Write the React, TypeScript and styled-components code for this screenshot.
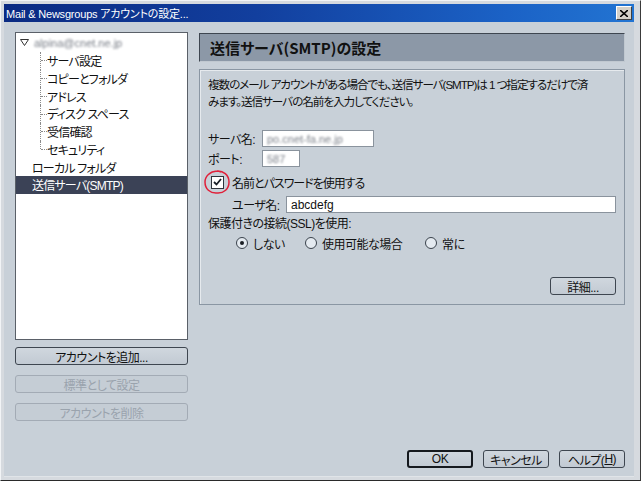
import React from "react";
import styled, { createGlobalStyle } from "styled-components";

const Global = createGlobalStyle`
  html, body { margin: 0; padding: 0; background: #ffffff; }
  body {
    font-family: "Liberation Sans", "Noto Sans CJK JP", sans-serif;
    font-size: 12px;
    color: #111;
    font-feature-settings: "palt";
    letter-spacing: -0.5px;
  }
  * { box-sizing: border-box; }
`;

const Window = styled.div`
  width: 641px;
  height: 481px;
  display: flex;
  flex-direction: column;
  background: #d6dadf;
  border: 1px solid;
  border-color: #f2f4f6 #3a3a3a #2a2a2a #f2f4f6;
  padding: 3px 6px 3px 3px;
  overflow: hidden;
`;

const TitleBar = styled.div`
  height: 18px;
  display: flex;
  align-items: center;
  justify-content: space-between;
  padding: 0 2px 0 2px;
  background: linear-gradient(90deg, #0a2a82 0%, #123f9e 40%, #1b62c6 80%, #2274d2 100%);
  color: #fff;
  font-size: 11px;
  letter-spacing: -0.2px;
  white-space: nowrap;
`;

const CloseBtn = styled.div`
  width: 16px;
  height: 14px;
  background: #d4d0c8;
  border: 1px solid;
  border-color: #ffffff #404040 #404040 #ffffff;
  display: flex;
  align-items: center;
  justify-content: center;
`;

const Body = styled.div`
  flex: 1;
  display: flex;
  flex-direction: column;
  background: #c8d0d8;
  padding: 10px 8px 8px 11px;
  border-bottom: 1px solid #e0e4e8;
`;

const Main = styled.div`
  display: flex;
  gap: 11px;
`;

const LeftCol = styled.div`
  width: 173px;
  display: flex;
  flex-direction: column;
`;

const Tree = styled.div`
  height: 308px;
  background: #fff;
  border: 1px solid #5a6068;
  padding-top: 1px;
  position: relative;
`;

const Row = styled.div<{ $indent: number; $selected?: boolean }>`
  height: 17.75px;
  display: flex;
  align-items: center;
  padding-left: ${(p) => p.$indent}px;
  background: ${(p) => (p.$selected ? "#3b4256" : "transparent")};
  color: ${(p) => (p.$selected ? "#ffffff" : "#111")};
  white-space: nowrap;
  position: relative;
  letter-spacing: -0.8px;
`;

const Blurred = styled.span`
  color: #7a7f88;
  filter: blur(1.1px);
  font-size: 11px;
  letter-spacing: 0;
`;

const Twisty = styled.svg`
  width: 9px;
  height: 7px;
  margin-right: 5px;
  flex: none;
`;

const Connector = styled.span<{ $last?: boolean }>`
  position: absolute;
  left: 24px;
  top: 0;
  width: 6px;
  height: ${(p) => (p.$last ? "50%" : "100%")};
  border-left: 1px dotted #8a8a8a;
  &::after {
    content: "";
    position: absolute;
    left: 0;
    top: 8.5px;
    width: 6px;
    border-top: 1px dotted #8a8a8a;
  }
`;

const Button = styled.button<{ $w?: number; $default?: boolean }>`
  width: ${(p) => (p.$w ? `${p.$w}px` : "100%")};
  height: 18px;
  padding: 0;
  font-family: "Liberation Sans", "Noto Sans CJK JP", sans-serif;
  font-feature-settings: "palt";
  font-size: 12px;
  letter-spacing: -0.5px;
  color: #111;
  background: linear-gradient(180deg, #d0d7de 0%, #c2cad3 100%);
  border: ${(p) => (p.$default ? "2px solid #15191e" : "1px solid #3e4650")};
  border-radius: 3px;
  display: flex;
  align-items: center;
  justify-content: center;
  white-space: nowrap;
  &:disabled {
    color: #9aa3ad;
    border-color: #a3abb5;
    background: #c5cdd5;
  }
`;

const LeftButtons = styled.div`
  display: flex;
  flex-direction: column;
  gap: 10px;
  margin-top: 7px;
`;

const RightCol = styled.div`
  width: 426px;
  display: flex;
  flex-direction: column;
  margin-top: 1px;
`;

const Header = styled.div`
  height: 29px;
  background: #8c98a7;
  border: 1px solid;
  border-color: #3e4650 #c0c8d0 #c0c8d0 #3e4650;
  display: flex;
  align-items: center;
  padding-left: 10px;
  font-size: 15px;
  font-weight: bold;
  letter-spacing: 0;
  color: #111;
  font-family: "Noto Sans CJK JP", sans-serif;
`;

const Panel = styled.div`
  margin-top: 7px;
  height: 236px;
  border: 1px solid #8a96a3;
  box-shadow: inset 1px 1px 0 #e6eaee;
  padding: 6px 8px 9px 8px;
  display: flex;
  flex-direction: column;
`;

const Desc = styled.div`
  line-height: 17px;
  white-space: nowrap;
  margin-bottom: 20px;
  font-size: 11.6px;
  letter-spacing: -1.05px;
`;

const FieldRow = styled.div<{ $indent?: number; $mt?: number }>`
  display: flex;
  align-items: center;
  height: 17px;
  padding-left: ${(p) => p.$indent ?? 0}px;
  margin-top: ${(p) => p.$mt ?? 0}px;
  white-space: nowrap;
`;

const Label = styled.span`
  width: 54px;
  flex: none;
`;

const Input = styled.div<{ $w?: number; $flex?: boolean }>`
  width: ${(p) => (p.$w ? `${p.$w}px` : "auto")};
  flex: ${(p) => (p.$flex ? 1 : "none")};
  height: 17px;
  background: #fff;
  border: 1px solid #8a939d;
  display: flex;
  align-items: center;
  padding-left: 4px;
  overflow: hidden;
  letter-spacing: 0;
`;

const CheckRow = styled.div`
  display: flex;
  align-items: center;
  height: 18px;
  margin-top: 6px;
  padding-left: 3px;
  position: relative;
  white-space: nowrap;
  letter-spacing: -1px;
`;

const CheckBox = styled.span`
  width: 13px;
  height: 13px;
  background: #fff;
  border: 1px solid #2e343c;
  display: flex;
  align-items: center;
  justify-content: center;
  margin-right: 8px;
`;

const Annotation = styled.svg`
  position: absolute;
  left: -5px;
  top: -4px;
  width: 28px;
  height: 26px;
  pointer-events: none;
`;

const RadioRow = styled.div`
  display: flex;
  align-items: center;
  height: 18px;
  margin-top: 3px;
  padding-left: 28px;
  white-space: nowrap;
`;

const RadioOption = styled.div<{ $w?: number }>`
  width: ${(p) => (p.$w ? `${p.$w}px` : "auto")};
  display: flex;
  align-items: center;
  gap: 5px;
`;

const Radio = styled.span<{ $on?: boolean }>`
  width: 12px;
  height: 12px;
  border-radius: 50%;
  border: 1px solid #3a424c;
  background: #e4eaf0;
  display: flex;
  align-items: center;
  justify-content: center;
  &::after {
    content: "";
    width: 4px;
    height: 4px;
    border-radius: 50%;
    background: #1a1e24;
    display: ${(p) => (p.$on ? "block" : "none")};
  }
`;

const PanelFooter = styled.div`
  margin-top: auto;
  display: flex;
  justify-content: flex-end;
`;

const Footer = styled.div`
  margin-top: auto;
  display: flex;
  justify-content: flex-end;
  gap: 10px;
  padding-right: 1px;
`;

const treeChildren = ["サーバ設定", "コピーとフォルダ", "アドレス", "ディスク スペース", "受信確認", "セキュリティ"];

export default function App() {
  return (
    <>
      <Global />
      <Window>
        <TitleBar>
          <span>Mail &amp; Newsgroups アカウントの設定...</span>
          <CloseBtn>
            <svg width="8" height="7" viewBox="0 0 8 7">
              <path d="M0 0 L8 7 M8 0 L0 7" stroke="#000" strokeWidth="1.6" />
            </svg>
          </CloseBtn>
        </TitleBar>
        <Body>
          <Main>
            <LeftCol>
              <Tree>
                <Row $indent={4}>
                  <Twisty viewBox="0 0 9 7">
                    <path d="M0.5 0.5 L8.5 0.5 L4.5 6.5 Z" fill="#fff" stroke="#333" strokeWidth="1" />
                  </Twisty>
                  <Blurred>alpina@cnet.ne.jp</Blurred>
                </Row>
                {treeChildren.map((t, i) => (
                  <Row key={t} $indent={31}>
                    <Connector $last={i === treeChildren.length - 1} />
                    {t}
                  </Row>
                ))}
                <Row $indent={16}>ローカル フォルダ</Row>
                <Row $indent={16} $selected>
                  送信サーバ(SMTP)
                </Row>
              </Tree>
              <LeftButtons>
                <Button>アカウントを追加...</Button>
                <Button disabled>標準として設定</Button>
                <Button disabled>アカウントを削除</Button>
              </LeftButtons>
            </LeftCol>
            <RightCol>
              <Header>送信サーバ(SMTP)の設定</Header>
              <Panel>
                <Desc>
                  複数のメール アカウントがある場合でも、送信サーバ(SMTP)は 1 つ指定するだけで済
                  <br />
                  みます。送信サーバの名前を入力してください。
                </Desc>
                <FieldRow>
                  <Label>サーバ名:</Label>
                  <Input $w={112}>
                    <Blurred>po.cnet-fa.ne.jp</Blurred>
                  </Input>
                </FieldRow>
                <FieldRow $mt={3}>
                  <Label>ポート:</Label>
                  <Input $w={38}>
                    <Blurred>587</Blurred>
                  </Input>
                </FieldRow>
                <CheckRow>
                  <CheckBox>
                    <svg width="9" height="8" viewBox="0 0 9 8">
                      <path d="M1 4 L3.5 6.5 L8 1" stroke="#1a2028" strokeWidth="1.8" fill="none" />
                    </svg>
                  </CheckBox>
                  名前とパスワードを使用する
                  <Annotation viewBox="0 0 28 26">
                    <path
                      d="M14 2 C20 1.5 26 6 26 13 C26 20 21 24.5 14 24 C7 24.5 2 20 2 13 C2 7 7 2.5 14 2 C16 2 17 2.5 18 3"
                      stroke="#e0203a"
                      strokeWidth="1.5"
                      fill="none"
                    />
                  </Annotation>
                </CheckRow>
                <FieldRow $indent={24} $mt={5}>
                  <Label>ユーザ名:</Label>
                  <Input $flex>abcdefg</Input>
                </FieldRow>
                <FieldRow $mt={1}>保護付きの接続(SSL)を使用:</FieldRow>
                <RadioRow>
                  <RadioOption $w={69}>
                    <Radio $on />
                    しない
                  </RadioOption>
                  <RadioOption $w={120}>
                    <Radio />
                    使用可能な場合
                  </RadioOption>
                  <RadioOption>
                    <Radio />
                    常に
                  </RadioOption>
                </RadioRow>
                <PanelFooter>
                  <Button $w={66}>詳細...</Button>
                </PanelFooter>
              </Panel>
            </RightCol>
          </Main>
          <Footer>
            <Button $w={66} $default>
              OK
            </Button>
            <Button $w={66}>キャンセル</Button>
            <Button $w={66}>
              ヘルプ(<u>H</u>)
            </Button>
          </Footer>
        </Body>
      </Window>
    </>
  );
}
